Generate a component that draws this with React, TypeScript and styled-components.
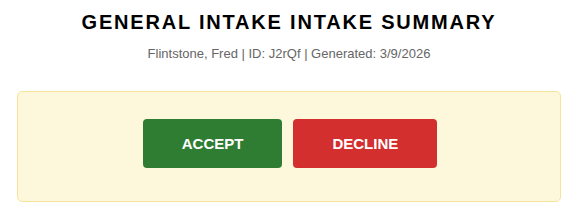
import styled, { createGlobalStyle } from "styled-components";

const Global = createGlobalStyle`
  body {
    margin: 0;
    background: #fff;
    font-family: "Liberation Sans", Arial, sans-serif;
  }
`;

const App = () => {
  return (
    <>
      <Global />
      <Page>
        <Header>
          <Title>GENERAL INTAKE INTAKE SUMMARY</Title>
          <Meta>Flintstone, Fred | ID: J2rQf | Generated: 3/9/2026</Meta>
        </Header>
        <Panel>
          <Button $bg="#2e7d32">ACCEPT</Button>
          <Button $bg="#d32f2f">DECLINE</Button>
        </Panel>
      </Page>
    </>
  );
};

const Page = styled.div`
  padding: 0 16px 0 17px;
`;
const Header = styled.div`
  text-align: center;
  padding-top: 10px;
`;
const Title = styled.h1`
  margin: 0;
  font-size: 20px;
  font-weight: bold;
  letter-spacing: 1.8px;
  color: #000;
  line-height: 24px;
`;
const Meta = styled.div`
  margin-top: 12px;
  font-size: 13px;
  color: #666;
  line-height: 16px;
`;
const Panel = styled.div`
  margin-top: 29px;
  background: #fdf8dc;
  border: 1px solid #f7e49a;
  border-radius: 5px;
  padding: 27px 0 33px 2px;
  display: flex;
  justify-content: center;
  gap: 11px;
`;
const Button = styled.button<{ $bg: string }>`
  background: ${(p) => p.$bg};
  color: #fff;
  border: none;
  border-radius: 4px;
  padding: 16px 39px;
  font-family: "Liberation Sans", Arial, sans-serif;
  font-size: 15px;
  font-weight: bold;
  line-height: 17px;
  cursor: pointer;
`;

export default App;
